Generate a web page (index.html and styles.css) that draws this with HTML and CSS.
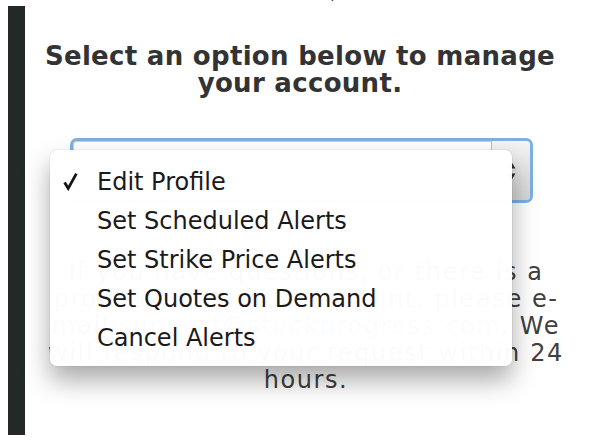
FILE: index.html
```html
<!DOCTYPE html>
<html lang="en">
<head>
<meta charset="utf-8">
<title>Manage your account</title>
<link rel="stylesheet" href="styles.css">
</head>
<body>
<p class="intro">Welcome to the areas, select an item.</p>
<div class="frame">
  <h1 class="title">Select an option below to manage<br>your account.</h1>
  <div class="picker">
    <div class="select">
      <span class="select-arrows">
        <svg width="9" height="20" viewBox="0 0 9 20" aria-hidden="true">
          <path d="M4.5 1 L8.5 7.5 L0.5 7.5 Z" fill="#2d2d2d"/>
          <path d="M4.5 19 L8.5 12.5 L0.5 12.5 Z" fill="#2d2d2d"/>
        </svg>
      </span>
    </div>
    <ul class="menu">
      <li class="menu-item"><span class="check"><svg width="15" height="19" viewBox="0 0 15 19" aria-hidden="true"><path d="M1.6 10.6 L5.2 16.4 L13.4 1.6" fill="none" stroke="#141414" stroke-width="2.8" stroke-linejoin="miter"/></svg></span>Edit Profile</li>
      <li class="menu-item"><span class="check"></span>Set Scheduled Alerts</li>
      <li class="menu-item"><span class="check"></span>Set Strike Price Alerts</li>
      <li class="menu-item"><span class="check"></span>Set Quotes on Demand</li>
      <li class="menu-item"><span class="check"></span>Cancel Alerts</li>
    </ul>
  </div>
  <p class="note">If you have questions, or there is a<br>problem with your account, please e-<br>mail <a class="note-link" href="#">support@stockprogress.com</a>. We<br>will respond to your request within 24<br>hours.</p>
</div>
</body>
</html>
```
FILE: styles.css
```css
html, body {
  margin: 0;
  padding: 0;
  background: #ffffff;
  overflow: hidden;
}

body {
  font-family: "DejaVu Sans", "Noto Sans", sans-serif;
  color: #333333;
}

.intro {
  margin: -21px 0 0;
  height: 27px;
  font-size: 20px;
  line-height: 26px;
  letter-spacing: 1px;
  text-align: center;
  color: #3a3a3a;
  white-space: nowrap;
}

.frame {
  margin-left: 8px;
  border-left: 17px solid #232828;
  width: 550px;
  height: 429px;
}

.title {
  margin: 0;
  padding-top: 37px;
  font-size: 26px;
  line-height: 27px;
  font-weight: bold;
  letter-spacing: 0.3px;
  text-align: center;
  color: #333333;
}

.picker {
  position: relative;
  margin: 41px 0 0 45px;
  width: 463px;
}

.select {
  height: 65px;
  box-sizing: border-box;
  border: 3px solid #7db0e4;
  border-radius: 7px;
  background: #ffffff;
  box-shadow: inset 0 0 0 1px #cfcfcf;
  display: flex;
  justify-content: flex-end;
}

.select-arrows {
  width: 38px;
  border-left: 1px solid #b9b9b9;
  border-radius: 0 4px 4px 0;
  background: linear-gradient(#f4f4f4, #d6d6d6);
  display: flex;
  align-items: center;
  justify-content: center;
}

.menu {
  position: absolute;
  left: -20px;
  top: 12px;
  width: 462px;
  margin: 0;
  padding: 12px 0 9px;
  list-style: none;
  background: rgba(255, 255, 255, 0.98);
  border-radius: 7px;
  box-shadow: 0 14px 26px rgba(0, 0, 0, 0.34), 0 0 1px rgba(0, 0, 0, 0.4);
}

.menu-item {
  display: flex;
  align-items: center;
  height: 39px;
  padding-left: 13px;
  font-size: 24px;
  color: #1a1a1a;
}

.check {
  width: 34px;
  flex: none;
  display: flex;
  align-items: center;
}

.note {
  margin: 56px 0 0;
  padding-left: 12px;
  font-size: 24px;
  line-height: 27px;
  letter-spacing: 1.6px;
  text-align: center;
  color: #404040;
}

.note-link {
  color: #3b6fd1;
  text-decoration: none;
}
```
